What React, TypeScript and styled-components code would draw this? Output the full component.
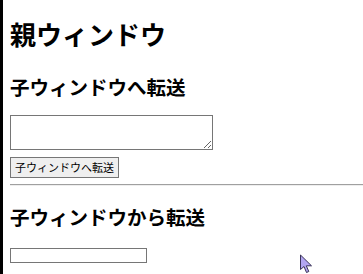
import React from "react";
import styled, { createGlobalStyle } from "styled-components";

const Global = createGlobalStyle`
  html, body { margin: 0; padding: 0; background: #fff; }
  body { font-family: "Noto Sans CJK JP", "Noto Sans", sans-serif; color: #000; }
`;

const Page = styled.div`
  position: relative;
  box-sizing: border-box;
  min-height: 274px;
  border-left: 3px solid #000;
  padding-left: 7px;
  overflow: hidden;
`;

const Title = styled.h1`
  margin: 0;
  padding-top: 21px;
  font-size: 26px;
  line-height: 26px;
  font-weight: bold;
`;

const Heading = styled.h2<{ $top: number }>`
  margin: ${(p) => p.$top}px 0 0;
  font-size: 19.5px;
  line-height: 20px;
  font-weight: bold;
`;

const TextBox = styled.textarea`
  display: block;
  box-sizing: border-box;
  margin: 18px 0 0;
  width: 203px;
  height: 35px;
  border: 1px solid #767676;
  padding: 2px;
  font-family: inherit;
  font-size: 11px;
`;

const SendButton = styled.button`
  display: block;
  box-sizing: border-box;
  margin: 7px 0 0;
  width: 109px;
  height: 21px;
  padding: 0;
  border: 1px solid #767676;
  border-radius: 0;
  background: #efefef;
  font-family: inherit;
  font-size: 11px;
  line-height: 19px;
  color: #000;
  text-align: center;
`;

const Rule = styled.hr`
  margin: 6px 0 0;
  border: none;
  border-top: 1px solid #a0a0a0;
  border-bottom: 1px solid #eeeeee;
  height: 0;
`;

const Field = styled.input`
  display: block;
  box-sizing: border-box;
  margin: 21px 0 0;
  width: 137px;
  height: 15px;
  border: 1px solid #767676;
  padding: 0 2px;
  font-family: inherit;
  font-size: 11px;
`;

const Cursor = styled.svg`
  position: absolute;
  left: 296px;
  top: 254px;
`;

export default function App() {
  return (
    <>
      <Global />
      <Page>
        <Title>親ウィンドウ</Title>
        <Heading $top={30}>子ウィンドウへ転送</Heading>
        <TextBox />
        <SendButton>子ウィンドウへ転送</SendButton>
        <Rule />
        <Heading $top={21}>子ウィンドウから転送</Heading>
        <Field type="text" />
        <Cursor width="15" height="20" viewBox="0 0 15 20">
          <path
            d="M1.5 1 L1.5 15.5 L5 12.5 L7.5 18.5 L9.8 17.5 L7.3 11.8 L12.5 11.8 Z"
            fill="#b3a6f2"
            stroke="#3a3358"
            strokeWidth="1"
            strokeLinejoin="round"
          />
        </Cursor>
      </Page>
    </>
  );
}
